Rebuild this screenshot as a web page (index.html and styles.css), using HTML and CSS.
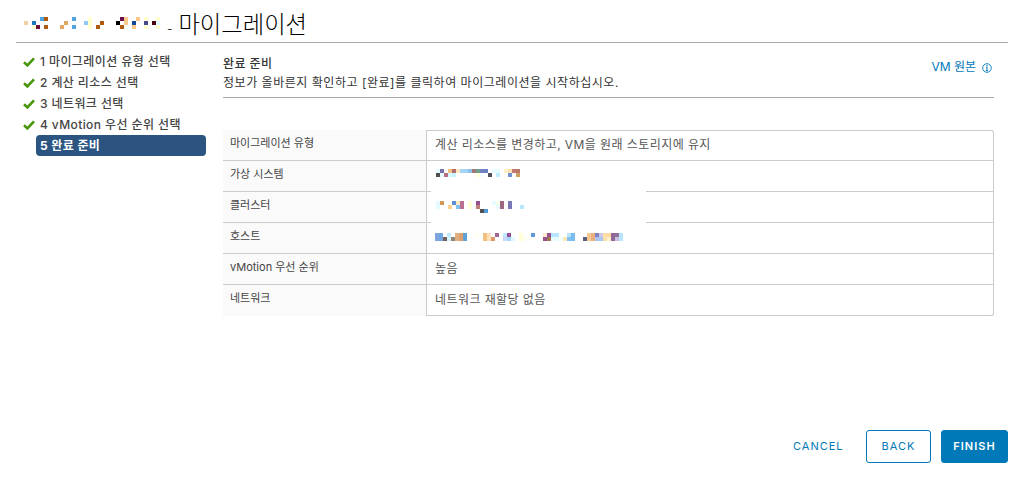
FILE: index.html
```html
<!DOCTYPE html>
<html lang="ko">

<head>
    <meta charset="UTF-8">
    <meta name="viewport" content="width=device-width, initial-scale=1.0">
    <title>마이그레이션</title>
    <link rel="stylesheet" href="styles.css">
</head>

<body>
    <div class="wizard">
        <header class="wizard-header">
            <svg class="mosaic title-mosaic" width="136" height="12" viewBox="24 17 136 12">
                <g fill="#4fa3e0"><rect x="40" y="17" width="4" height="4"/><rect x="72" y="17" width="4" height="4"/><rect x="72" y="25" width="4" height="4"/></g>
                <g fill="#b05a10"><rect x="44" y="17" width="4" height="4"/><rect x="44" y="25" width="4" height="4"/><rect x="120" y="25" width="4" height="4"/><rect x="100" y="21" width="4" height="4"/><rect x="96" y="25" width="4" height="4"/></g>
                <g fill="#ffffd0"><rect x="88" y="17" width="4" height="12"/><rect x="32" y="25" width="4" height="4"/><rect x="144" y="17" width="4" height="4"/><rect x="144" y="25" width="4" height="4"/><rect x="156" y="17" width="4" height="4"/><rect x="156" y="25" width="4" height="4"/></g>
                <g fill="#fdc98a"><rect x="136" y="17" width="4" height="4"/><rect x="124" y="17" width="4" height="8"/><rect x="132" y="25" width="4" height="4"/></g>
                <g fill="#e0a860"><rect x="64" y="21" width="4" height="4"/><rect x="60" y="25" width="4" height="4"/></g>
                <rect x="24" y="21" width="4" height="4" fill="#f0d0a0"/>
                <rect x="32" y="21" width="4" height="4" fill="#1a78c0"/>
                <rect x="36" y="25" width="4" height="4" fill="#6b0f3a"/>
                <rect x="84" y="21" width="4" height="4" fill="#90c8f8"/>
                <rect x="120" y="17" width="4" height="4" fill="#6b0f4a"/>
                <rect x="116" y="21" width="4" height="4" fill="#000"/>
                <rect x="132" y="21" width="4" height="4" fill="#104a98"/>
                <rect x="144" y="21" width="4" height="4" fill="#4a4a90"/>
                <rect x="152" y="21" width="4" height="4" fill="#4a0010"/>
                <rect x="156" y="21" width="4" height="4" fill="#e0f8ff"/>
            </svg>
            <h1 class="wizard-title"><span class="title-dash">-</span>마이그레이션</h1>
        </header>

        <div class="wizard-body">
            <nav class="steps">
                <div class="step done"><svg class="check" width="12" height="10" viewBox="0 0 12 10"><path d="M1 5.2 4.4 8.4 11 1.4" fill="none" stroke="#48960c" stroke-width="2.6"/></svg><span class="step-label">1 마이그레이션 유형 선택</span></div>
                <div class="step done"><svg class="check" width="12" height="10" viewBox="0 0 12 10"><path d="M1 5.2 4.4 8.4 11 1.4" fill="none" stroke="#48960c" stroke-width="2.6"/></svg><span class="step-label">2 계산 리소스 선택</span></div>
                <div class="step done"><svg class="check" width="12" height="10" viewBox="0 0 12 10"><path d="M1 5.2 4.4 8.4 11 1.4" fill="none" stroke="#48960c" stroke-width="2.6"/></svg><span class="step-label">3 네트워크 선택</span></div>
                <div class="step done"><svg class="check" width="12" height="10" viewBox="0 0 12 10"><path d="M1 5.2 4.4 8.4 11 1.4" fill="none" stroke="#48960c" stroke-width="2.6"/></svg><span class="step-label">4 vMotion 우선 순위 선택</span></div>
                <div class="step active"><span class="step-label">5 완료 준비</span></div>
            </nav>

            <main class="content">
                <div class="content-head">
                    <div>
                        <h2 class="content-title">완료 준비</h2>
                        <p class="content-desc">정보가 올바른지 확인하고 [완료]를 클릭하여 마이그레이션을 시작하십시오.</p>
                    </div>
                    <a class="vm-origin">VM 원본
                        <svg class="info" width="10" height="10" viewBox="0 0 10 10"><circle cx="5" cy="5" r="4.3" fill="none" stroke="#0079b8" stroke-width=".9"/><path d="M5 4.2V7.6M3.9 7.6H6.1M4.1 4.2H5" fill="none" stroke="#0079b8"/><rect x="4.4" y="2.1" width="1.2" height="1.2" fill="#0079b8"/></svg>
                    </a>
                </div>

                <div class="summary">
                    <div class="row">
                        <div class="cell-label">마이그레이션 유형</div>
                        <div class="cell-value">계산 리소스를 변경하고, VM을 원래 스토리지에 유지</div>
                    </div>
                    <div class="row">
                        <div class="cell-label">가상 시스템</div>
                        <div class="cell-value">
                            <div class="mask">
                                <svg class="mosaic" width="84" height="8" viewBox="436 169 84 8">
                                    <rect x="436" y="169" width="4" height="4" fill="#e6fbff"/><rect x="440" y="169" width="4" height="4" fill="#7a70a8"/><rect x="448" y="169" width="4" height="4" fill="#f0c080"/><rect x="452" y="169" width="4" height="4" fill="#b07070"/><rect x="456" y="169" width="4" height="4" fill="#fde8c0"/><rect x="460" y="169" width="8" height="4" fill="#a4d4f8"/><rect x="468" y="169" width="4" height="4" fill="#90c0e8"/><rect x="472" y="169" width="4" height="4" fill="#a07878"/><rect x="476" y="169" width="4" height="4" fill="#70a090"/><rect x="480" y="169" width="4" height="4" fill="#7080c0"/><rect x="484" y="169" width="4" height="4" fill="#6880c0"/><rect x="492" y="169" width="8" height="4" fill="#e6fbff"/><rect x="504" y="169" width="4" height="4" fill="#fff0c8"/><rect x="508" y="169" width="4" height="4" fill="#fde0b0"/><rect x="512" y="169" width="4" height="4" fill="#c07870"/><rect x="516" y="169" width="4" height="4" fill="#b87868"/>
                                    <rect x="436" y="173" width="4" height="4" fill="#505050"/><rect x="440" y="173" width="4" height="4" fill="#e6fbff"/><rect x="444" y="173" width="4" height="4" fill="#b87080"/><rect x="448" y="173" width="4" height="4" fill="#d8f8ff"/><rect x="452" y="173" width="4" height="4" fill="#c8f4ff"/><rect x="476" y="173" width="4" height="4" fill="#ffffd8"/><rect x="480" y="173" width="4" height="4" fill="#f0fcff"/><rect x="488" y="173" width="4" height="4" fill="#505058"/><rect x="496" y="173" width="4" height="4" fill="#c0ecff"/><rect x="508" y="173" width="4" height="4" fill="#7090d0"/><rect x="516" y="173" width="4" height="4" fill="#d0a060"/>
                                </svg>
                            </div>
                        </div>
                    </div>
                    <div class="row">
                        <div class="cell-label">클러스터</div>
                        <div class="cell-value">
                            <div class="mask mask-cluster">
                                <svg class="mosaic" width="88" height="12" viewBox="436 201 88 12">
                                    <rect x="436" y="201" width="4" height="8" fill="#e6fbff"/><rect x="440" y="201" width="4" height="4" fill="#d09850"/><rect x="452" y="201" width="4" height="4" fill="#5890d0"/><rect x="456" y="201" width="4" height="4" fill="#fde8c0"/><rect x="460" y="201" width="4" height="8" fill="#b87090"/><rect x="468" y="201" width="4" height="8" fill="#ffffd8"/><rect x="476" y="201" width="4" height="4" fill="#985090"/><rect x="492" y="201" width="4" height="4" fill="#e6fbff"/><rect x="496" y="201" width="4" height="4" fill="#f8ffe8"/><rect x="500" y="201" width="4" height="8" fill="#a06880"/><rect x="508" y="201" width="4" height="8" fill="#7878b8"/>
                                    <rect x="448" y="205" width="4" height="4" fill="#ffd090"/><rect x="456" y="205" width="4" height="4" fill="#80c0f0"/><rect x="476" y="205" width="4" height="4" fill="#c08078"/><rect x="496" y="205" width="4" height="4" fill="#e6fbff"/><rect x="520" y="205" width="4" height="4" fill="#b8e8ff"/>
                                    <rect x="480" y="209" width="4" height="4" fill="#505050"/><rect x="484" y="209" width="4" height="4" fill="#5098d8"/>
                                </svg>
                            </div>
                        </div>
                    </div>
                    <div class="row">
                        <div class="cell-label">호스트</div>
                        <div class="cell-value">
                            <svg class="mosaic host-mosaic" width="188" height="8" viewBox="436 233 188 8">
                                <rect x="436" y="233" width="4" height="8" fill="#80a4e0"/><rect x="440" y="233" width="4" height="8" fill="#70a8e0"/><rect x="448" y="233" width="4" height="4" fill="#c0ecff"/><rect x="456" y="233" width="4" height="8" fill="#e0b080"/><rect x="460" y="233" width="4" height="8" fill="#e0a070"/><rect x="464" y="233" width="4" height="8" fill="#60a0d8"/><rect x="476" y="233" width="4" height="4" fill="#fffff0"/><rect x="484" y="233" width="4" height="8" fill="#f0c080"/><rect x="488" y="233" width="4" height="8" fill="#fde0b8"/><rect x="496" y="233" width="4" height="4" fill="#a06890"/><rect x="504" y="233" width="4" height="4" fill="#c0e8ff"/><rect x="508" y="233" width="4" height="4" fill="#985090"/><rect x="520" y="233" width="4" height="8" fill="#ffffd8"/><rect x="532" y="233" width="4" height="4" fill="#6098d8"/><rect x="544" y="233" width="4" height="4" fill="#fde8d0"/><rect x="548" y="233" width="4" height="4" fill="#985090"/><rect x="552" y="233" width="8" height="4" fill="#b8e4ff"/><rect x="568" y="233" width="4" height="4" fill="#b8e4ff"/><rect x="572" y="233" width="4" height="8" fill="#78bcf0"/><rect x="588" y="233" width="4" height="8" fill="#f8c890"/><rect x="592" y="233" width="4" height="8" fill="#e8b080"/><rect x="596" y="233" width="4" height="4" fill="#8080c0"/><rect x="600" y="233" width="4" height="4" fill="#d0c8e8"/><rect x="604" y="233" width="4" height="8" fill="#fde0a8"/><rect x="608" y="233" width="4" height="4" fill="#fdd8a0"/><rect x="612" y="233" width="4" height="8" fill="#906898"/><rect x="616" y="233" width="4" height="4" fill="#907098"/><rect x="620" y="233" width="4" height="8" fill="#b8e4ff"/>
                                <rect x="444" y="237" width="4" height="4" fill="#706060"/><rect x="448" y="237" width="4" height="4" fill="#d8f4ff"/><rect x="452" y="237" width="4" height="4" fill="#908878"/><rect x="492" y="237" width="4" height="4" fill="#e09868"/><rect x="504" y="237" width="4" height="4" fill="#c8d8f8"/><rect x="508" y="237" width="4" height="4" fill="#a8d8f8"/><rect x="512" y="237" width="4" height="4" fill="#e0f8ff"/><rect x="524" y="237" width="4" height="4" fill="#fffff0"/><rect x="544" y="237" width="4" height="4" fill="#985090"/><rect x="548" y="237" width="4" height="4" fill="#a07850"/><rect x="552" y="237" width="8" height="4" fill="#e6fbff"/><rect x="560" y="237" width="4" height="4" fill="#f0fff8"/><rect x="564" y="237" width="4" height="4" fill="#fde8b8"/><rect x="568" y="237" width="4" height="4" fill="#80c0f0"/><rect x="584" y="237" width="4" height="4" fill="#586080"/><rect x="596" y="237" width="4" height="4" fill="#b0c0f0"/><rect x="600" y="237" width="4" height="4" fill="#a8c8f0"/><rect x="608" y="237" width="4" height="4" fill="#fff0d0"/><rect x="616" y="237" width="4" height="4" fill="#c8c0e0"/>
                            </svg>
                        </div>
                    </div>
                    <div class="row">
                        <div class="cell-label">vMotion 우선 순위</div>
                        <div class="cell-value">높음</div>
                    </div>
                    <div class="row">
                        <div class="cell-label">네트워크</div>
                        <div class="cell-value">네트워크 재할당 없음</div>
                    </div>
                </div>
            </main>
        </div>

        <footer class="wizard-footer">
            <button class="btn btn-link">CANCEL</button>
            <button class="btn btn-outline">BACK</button>
            <button class="btn btn-primary">FINISH</button>
        </footer>
    </div>
</body>

</html>
```

FILE: styles.css
```css
html, body {
    height: 100%;
}
body {
    margin: 0;
    background: #fff;
    color: #333;
    font-family: Inter, "Noto Sans CJK KR", sans-serif;
    font-size: 12px;
}
.wizard {
    height: 477px;
    display: flex;
    flex-direction: column;
    padding: 0 13px 0 16px;
    box-sizing: border-box;
    overflow: hidden;
}
.mosaic {
    display: block;
    flex: none;
}

/* header */
.wizard-header {
    height: 42px;
    display: flex;
    align-items: flex-start;
    padding-left: 8px;
    border-bottom: 1px solid #a9a9a9;
}
.title-mosaic {
    margin-top: 17px;
}
.wizard-title {
    margin: 9px 0 0 7px;
    font-size: 23.3px;
    line-height: 32px;
    font-weight: 300;
    color: #000;
    white-space: nowrap;
}
.title-dash {
    font-size: 12px;
    margin-right: 6px;
}

/* body */
.wizard-body {
    flex: 1;
    display: flex;
}
.steps {
    width: 190px;
    flex: none;
    padding-top: 8px;
    margin-right: 17px;
}
.step {
    height: 21px;
    display: flex;
    align-items: center;
    font-weight: 500;
    color: #444;
    letter-spacing: .4px;
    white-space: nowrap;
}
.check {
    flex: none;
    margin: 1px 0 0 7px;
}
.step-label {
    margin-left: 5px;
    line-height: 21px;
}
.step.active {
    margin-left: 20px;
    width: 170px;
    border-radius: 4px;
    background: #2b5580;
    color: #fff;
    font-weight: 700;
}
.step.active .step-label {
    margin-left: 4px;
}

.content {
    width: 771px;
    flex: none;
}
.content-head {
    height: 54px;
    display: flex;
    justify-content: space-between;
    border-bottom: 1px solid #a9a9a9;
}
.content-title {
    margin: 10px 0 0;
    padding-top: 1px;
    font-size: 12px;
    line-height: 19px;
    font-weight: 500;
    letter-spacing: .4px;
    color: #333;
}
.content-desc {
    margin: 0;
    line-height: 20px;
    letter-spacing: .53px;
    color: #333;
}
.vm-origin {
    margin: 14px 2px 0 0;
    line-height: 20px;
    color: #0079b8;
    display: flex;
    align-items: center;
    height: 20px;
}
.info {
    margin-left: 6px;
    margin-top: 2px;
}

/* summary table */
.summary {
    margin-top: 32px;
}
.row {
    display: flex;
    height: 31px;
    box-sizing: border-box;
    border-bottom: 1px solid #ccc;
}
.row:last-child {
    border-bottom: 0;
}
.cell-label {
    width: 203px;
    flex: none;
    box-sizing: border-box;
    padding: 5px 0 0 7px;
    background: #fafafa;
    font-size: 11px;
    line-height: 16px;
    color: #444;
}
.cell-value {
    flex: 1;
    position: relative;
    padding: 6px 0 0 8px;
    border-left: 1px solid #ccc;
    border-right: 1px solid #ccc;
    line-height: 18px;
    letter-spacing: .42px;
    color: #565656;
}
.row:first-child .cell-value {
    padding-top: 5px;
    border-top: 1px solid #ccc;
    border-top-right-radius: 3px;
}
.row:last-child .cell-value {
    border-bottom: 1px solid #ccc;
    border-bottom-right-radius: 3px;
}
/* redacted rows: white patch runs over the row line */
.mask {
    position: absolute;
    left: 4px;
    top: 0;
    bottom: -1px;
    width: 215px;
    padding: 8px 0 0 5px;
    box-sizing: border-box;
    background: #fff;
}
.mask-cluster {
    padding-top: 9px;
}
.host-mosaic {
    margin-top: 4px;
}

/* footer */
.wizard-footer {
    display: flex;
    justify-content: flex-end;
    align-items: center;
    padding-bottom: 14px;
}
.btn {
    height: 33px;
    box-sizing: border-box;
    border-radius: 3px;
    border: 1px solid #0079b8;
    background: #fff;
    color: #0079b8;
    font-family: Inter, sans-serif;
    font-size: 11px;
    font-weight: 400;
    letter-spacing: 1px;
    padding: 0 0 2px;
    margin: 0;
}
.btn-link {
    border-color: transparent;
    background: none;
    width: 52px;
    margin-right: 22px;
}
.btn-outline {
    width: 65px;
    margin-right: 10px;
}
.btn-primary {
    width: 67px;
    background: #0079b8;
    color: #fff;
    font-weight: 600;
}
```
